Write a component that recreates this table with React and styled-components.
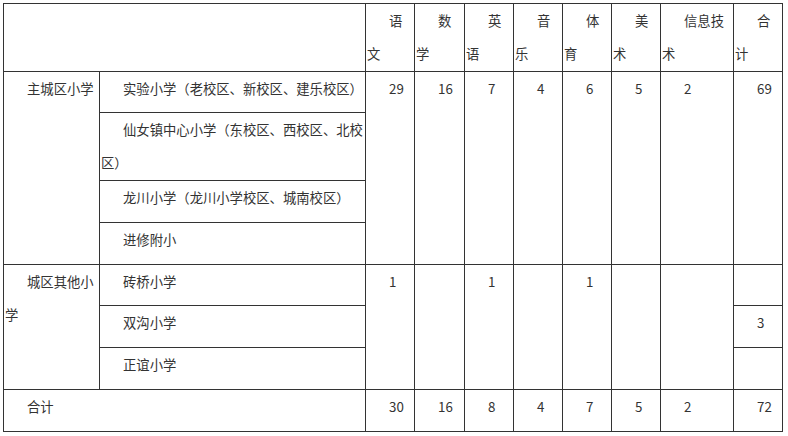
import React from 'react';
import styled, { createGlobalStyle } from 'styled-components';

const GlobalStyle = createGlobalStyle`
  html, body {
    margin: 0;
    padding: 0;
    background: #ffffff;
  }
  body {
    font-family: "Noto Sans CJK SC", "Noto Sans", sans-serif;
    color: #333333;
  }
`;

const Page = styled.div`
  padding: 3px 0 0 3px;
`;

const Table = styled.table`
  width: 780px;
  border-collapse: collapse;
  table-layout: fixed;
  font-size: 13.33px;
  line-height: 33px;
  color: #333333;
`;

const Col = styled.col`
  width: ${({ $w }) => $w}px;
`;

const Row = styled.tr`
  height: ${({ $h }) => $h}px;
`;

const Cell = styled.td`
  border: 1px solid #333333;
  vertical-align: top;
  padding: 0 1px 0 1px;
  text-indent: 22px;
  word-break: break-all;
`;

const SUBJECTS = [
  ['语', '文'],
  ['数', '学'],
  ['英', '语'],
  ['音', '乐'],
  ['体', '育'],
  ['美', '术'],
  ['信息技', '术'],
  ['合', '计'],
];

const WIDTHS = [96, 266, 49, 50, 49, 49, 49, 49, 73, 49];

const MAIN_TOTALS = ['29', '16', '7', '4', '6', '5', '2', '69'];
const OTHER_TOTALS = ['1', '', '1', '', '1', '', ''];
const SUM = ['30', '16', '8', '4', '7', '5', '2', '72'];

const App = () => {
  return (
    <Page>
      <GlobalStyle />
      <Table>
        <colgroup>
          {WIDTHS.map((w, i) => (
            <Col key={i} $w={w} />
          ))}
        </colgroup>
        <tbody>
          <Row $h={68}>
            <Cell colSpan={2} />
            {SUBJECTS.map(([a, b]) => (
              <Cell key={a + b}>
                {a}
                <br />
                {b}
              </Cell>
            ))}
          </Row>
          <Row $h={41}>
            <Cell rowSpan={4}>主城区小学</Cell>
            <Cell>实验小学（老校区、新校区、建乐校区）</Cell>
            {MAIN_TOTALS.map((n, i) => (
              <Cell key={i} rowSpan={4}>
                {n}
              </Cell>
            ))}
          </Row>
          <Row $h={68}>
            <Cell>
              仙女镇中心小学（东校区、西校区、北校
              <br />
              区）
            </Cell>
          </Row>
          <Row $h={42}>
            <Cell>龙川小学（龙川小学校区、城南校区）</Cell>
          </Row>
          <Row $h={42}>
            <Cell>进修附小</Cell>
          </Row>
          <Row $h={41}>
            <Cell rowSpan={3}>
              城区其他小
              <br />
              学
            </Cell>
            <Cell>砖桥小学</Cell>
            {OTHER_TOTALS.map((n, i) => (
              <Cell key={i} rowSpan={3}>
                {n}
              </Cell>
            ))}
            <Cell />
          </Row>
          <Row $h={42}>
            <Cell>双沟小学</Cell>
            <Cell>3</Cell>
          </Row>
          <Row $h={42}>
            <Cell>正谊小学</Cell>
            <Cell />
          </Row>
          <Row $h={42}>
            <Cell colSpan={2}>合计</Cell>
            {SUM.map((n, i) => (
              <Cell key={i}>{n}</Cell>
            ))}
          </Row>
        </tbody>
      </Table>
    </Page>
  );
};

export default App;
